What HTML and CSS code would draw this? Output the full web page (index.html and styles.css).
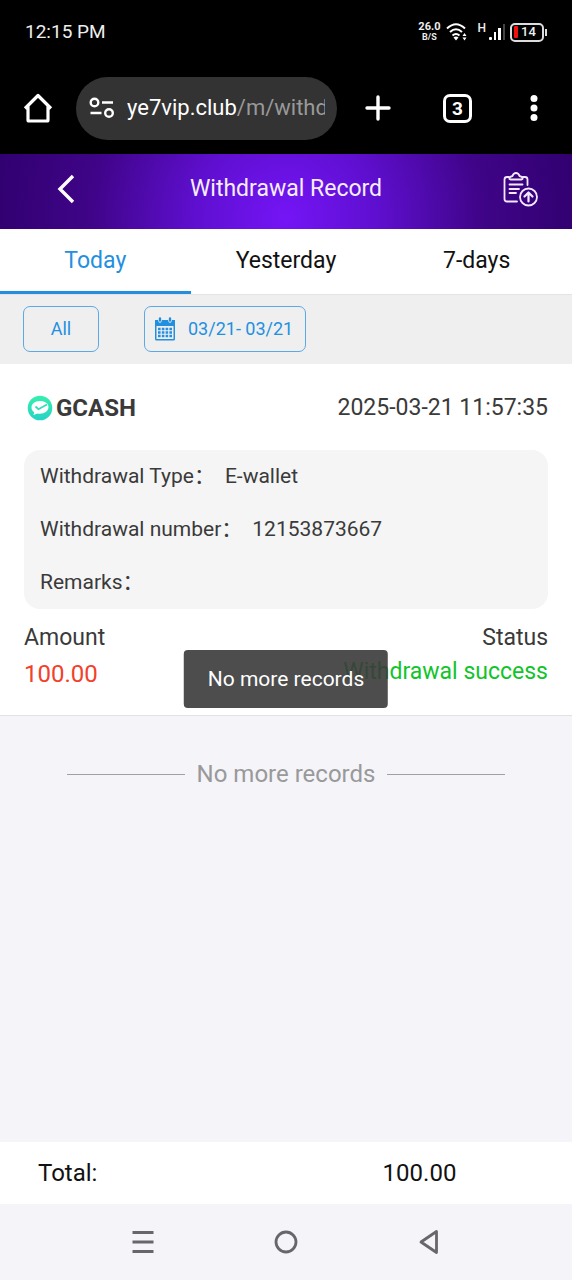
FILE: index.html
```html
<!DOCTYPE html>
<html lang="en">
<head>
<meta charset="utf-8">
<meta name="viewport" content="width=device-width, initial-scale=1">
<title>Withdrawal Record</title>
<link rel="stylesheet" href="styles.css">
</head>
<body>
<div class="status-bar">
  <time class="clock">12:15 PM</time>
  <div class="indicators">
    <div class="speed"><span class="speed-value">26.0</span><span class="speed-unit">B/S</span></div>
    <svg class="wifi" width="22" height="20" viewBox="0 0 22 20" fill="none" stroke="#fff" stroke-width="2">
      <path d="M1 6.500Q10 -2 19 6.500M4 10Q10 4.500 16 10M6.500 13.500Q10 10.500 13.500 13.500"/>
      <path d="M7.500 15.500L10 18.500L12.500 15.500Q10 13.500 7.500 15.500Z" fill="#fff" stroke="none"/>
      <path d="M18.500 11L20.500 14H16.500ZM18.500 18.500L16.500 15.500H20.500Z" fill="#fff" stroke="none"/>
    </svg>
    <span class="network">H</span>
    <svg class="signal" width="18" height="18" viewBox="0 0 18 18">
      <g fill="#fff"><rect x="1" y="14" width="3" height="3" rx="1"/><rect x="6" y="9" width="2" height="8"/><rect x="10" y="5" width="3" height="12"/></g>
      <rect x="15" y="1" width="2" height="16" fill="#444"/>
    </svg>
    <div class="battery"><span class="battery-level"></span>14</div>
  </div>
</div>

<div class="toolbar">
  <button class="tool home" aria-label="Home">
    <svg width="30" height="32" viewBox="0 0 30 32" fill="none" stroke="#fff" stroke-width="3.200" stroke-linejoin="round"><path d="M2 16.500L15 3.500L28 16.500M5 14.500V28Q5 29 6 29H24Q25 29 25 28V14.500"/></svg>
  </button>
  <button class="address">
    <svg class="tune" width="26" height="22" viewBox="0 0 26 22" fill="none" stroke="#fff" stroke-width="2.400"><circle cx="6.500" cy="5.500" r="3.800"/><path d="M14 5.500H25M2.500 16H13.500"/><circle cx="21" cy="16" r="3.800"/></svg>
    <span class="url">ye7vip.club<span class="path">/m/withdr</span></span>
  </button>
  <button class="tool add" aria-label="New tab">
    <svg width="28" height="28" viewBox="0 0 28 28" stroke="#fff" stroke-width="3.400" stroke-linecap="round"><path d="M14 3V25M3 14H25"/></svg>
  </button>
  <button class="tool tabs-count" aria-label="3 open tabs"><span class="count">3</span></button>
  <button class="tool more" aria-label="Menu">
    <svg width="8" height="28" viewBox="0 0 8 28" fill="#fff"><circle cx="4" cy="4.500" r="3.500"/><circle cx="4" cy="14" r="3.500"/><circle cx="4" cy="23.500" r="3.500"/></svg>
  </button>
</div>

<div class="app">
  <header class="header">
    <button class="icon-button back" aria-label="Back">
      <svg width="20" height="30" viewBox="0 0 20 30" fill="none" stroke="#fff" stroke-width="3.400"><path d="M17 2L4 15L17 28"/></svg>
    </button>
    <h1 class="title">Withdrawal Record</h1>
    <button class="icon-button submit" aria-label="Withdraw">
      <svg width="36" height="36" viewBox="0 0 36 36" fill="none" stroke="#f3e9ff" stroke-width="1.800" stroke-linecap="round" stroke-linejoin="round">
        <path d="M15 30.500H5Q2.500 30.500 2.500 28V8.500Q2.500 6 5 6H7M20.500 6H23Q25.500 6 25.500 8.500V14"/>
        <path d="M8.500 8.500Q7 8.500 7.500 7Q8 5.500 10.500 5Q11.500 2 14 2Q16.500 2 17.500 5Q20 5.500 20.500 7Q21 8.500 19.500 8.500Z"/>
        <path d="M7.500 13.500H20.500M7.500 18H17M7.500 22H14"/>
        <circle cx="26.500" cy="26" r="8.500"/>
        <path d="M26.500 30.500V22M22.500 25.500L26.500 21.500L30.500 25.500" stroke-width="2.200"/>
      </svg>
    </button>
  </header>

  <nav class="tabs">
    <button class="tab active">Today</button>
    <button class="tab">Yesterday</button>
    <button class="tab">7-days</button>
  </nav>

  <div class="filters">
    <button class="filter type">All</button>
    <button class="filter range">
      <svg width="22" height="24" viewBox="0 0 22 24">
        <path d="M1 3H4Q4.500 6 6 6Q7.500 6 8 3H14Q14.500 6 16 6Q17.500 6 18 3H21V22Q21 23.500 19.500 23.500H2.500Q1 23.500 1 22Z" fill="#248fdf"/>
        <path d="M6 1.500V3.500M16 1.500V3.500" stroke="#248fdf" stroke-width="2.400" stroke-linecap="round"/>
        <path d="M2.500 9H19.500V22H2.500Z" fill="#efefef"/>
        <path d="M4 12H18M4 15.500H18M4 19H18" stroke="#248fdf" stroke-width="2.400" stroke-dasharray="2.600 1.200"/>
      </svg>
      <span>03/21- 03/21</span>
    </button>
  </div>

  <article class="record">
    <div class="record-head">
      <h2 class="wallet">
        <svg width="26" height="26" viewBox="0 0 26 26">
          <defs><linearGradient id="mint" x1="0" y1="0" x2="0" y2="1"><stop offset="0" stop-color="#35f0ad"/><stop offset="1" stop-color="#25d3c5"/></linearGradient></defs>
          <circle cx="13" cy="13" r="12.300" fill="url(#mint)"/>
          <path d="M13 6C7.500 6 4.500 9 4.500 12.500C4.500 14.500 5.500 16 7.200 17.200L6.500 20L10.500 18.500C17 19.500 21.500 16 21.500 12C21.500 8.500 18 6 13 6Z" fill="#fff"/>
          <path d="M8.500 11.500L11.500 14.200L20 9.500" fill="none" stroke="#31dfb6" stroke-width="1.800"/>
        </svg>
        GCASH
      </h2>
      <time class="date">2025-03-21 11:57:35</time>
    </div>
    <dl class="details">
      <div class="detail"><dt>Withdrawal Type：</dt><dd>E-wallet</dd></div>
      <div class="detail"><dt>Withdrawal number：</dt><dd>12153873667</dd></div>
      <div class="detail"><dt>Remarks：</dt><dd></dd></div>
    </dl>
    <div class="summary">
      <div class="column"><span>Amount</span><span class="amount">100.00</span></div>
      <div class="column right"><span>Status</span><span class="success">Withdrawal success</span></div>
    </div>
  </article>

  <p class="end">No more records</p>

  <footer class="total"><span>Total:</span><span class="total-value">100.00</span></footer>
  <div class="toast" role="status">No more records</div>
</div>

<nav class="system-nav">
  <button class="tool" aria-label="Recent apps"><svg width="24" height="26" viewBox="0 0 24 26" stroke="#68666b" stroke-width="2.800"><path d="M1.500 3.500H22.500M1.500 13H22.500M1.500 22.500H22.500"/></svg></button>
  <button class="tool" aria-label="Home screen"><svg width="24" height="26" viewBox="0 0 24 26" fill="none" stroke="#68666b" stroke-width="2.800"><circle cx="12" cy="13" r="10"/></svg></button>
  <button class="tool" aria-label="Go back"><svg width="24" height="26" viewBox="0 0 24 26" fill="none" stroke="#68666b" stroke-width="2.800" stroke-linejoin="round"><path d="M19.500 2.500V23.500L4 13Z"/></svg></button>
</nav>
</body>
</html>
```

FILE: styles.css
```css
* {
  box-sizing: border-box;
}

body {
  display: flex;
  flex-direction: column;
  min-height: 100vh;
  margin: 0;
  background: #f4f4f9;
  color: #3a3a3a;
  font-family: Roboto, "Noto Sans CJK SC", sans-serif;
  font-size: 23px;
  line-height: 28px;
}

button {
  padding: 0;
  border: 0;
  background: none;
  color: inherit;
  font: inherit;
}

svg {
  display: block;
  flex: none;
}

h1,
h2,
p,
dl,
dd {
  margin: 0;
  font-size: inherit;
}

/* Device status bar */
.status-bar {
  display: flex;
  align-items: center;
  justify-content: space-between;
  height: 64px;
  padding: 0 28px 0 25px;
  background: #000;
  color: #eee;
}

.clock {
  font-size: 19px;
}

.indicators {
  display: flex;
  align-items: center;
}

.speed {
  display: flex;
  flex-direction: column;
  align-items: center;
  margin-right: 6px;
  font-size: 12px;
  font-weight: 700;
  line-height: 10px;
}

.speed-value {
  font-size: 11px;
}

.speed-unit {
  font-size: 9px;
}

.network {
  align-self: flex-start;
  margin: 0 2px 0 9px;
  font-size: 12px;
  font-weight: 500;
  line-height: 12px;
}

.signal {
  margin-right: 4px;
}

.battery {
  position: relative;
  display: flex;
  align-items: center;
  gap: 3px;
  width: 34px;
  height: 19px;
  padding-left: 2px;
  border: 2px solid #ddd;
  border-radius: 5px;
  font-size: 13px;
  font-weight: 500;
}

.battery::after {
  position: absolute;
  right: -5px;
  width: 2px;
  height: 7px;
  background: #ddd;
  content: "";
}

.battery-level {
  width: 4px;
  height: 12px;
  border-radius: 1px;
  background: #f01010;
}

/* Browser toolbar */
.toolbar {
  display: flex;
  align-items: center;
  height: 90px;
  padding: 0 34px 2px 23px;
  background: #000;
  color: #fff;
}

.tool {
  display: flex;
  align-items: center;
  justify-content: center;
}

.address {
  display: flex;
  flex: 1;
  align-items: center;
  gap: 13px;
  min-width: 0;
  height: 63px;
  margin: 0 27px 0 23px;
  padding: 0 12px;
  border-radius: 32px;
  background: #333;
}

.url {
  flex: 1;
  overflow: hidden;
  font-size: 22px;
  text-align: left;
  white-space: nowrap;
}

.path {
  color: #999;
}

.add {
  margin-right: 51px;
}

.tabs-count {
  margin-right: 58px;
}

.count {
  width: 29px;
  height: 29px;
  border: 3px solid #fff;
  border-radius: 7px;
  font-size: 19px;
  font-weight: 700;
  line-height: 23px;
}

/* Page */
.app {
  position: relative;
  display: flex;
  flex: 1;
  flex-direction: column;
}

.header {
  display: grid;
  grid-template-columns: 1fr auto 1fr;
  align-items: center;
  height: 75px;
  padding: 0 34px 5px;
  background: radial-gradient(circle 300px at 50% 85%, #7415f6 0%, #5f0fd0 30%, #3f0488 65%, #30006e 100%);
  color: #f5ecff;
}

.back {
  margin-left: 22px;
}

.submit {
  justify-self: end;
}

.title {
  font-weight: 400;
}

.tabs {
  display: grid;
  grid-template-columns: repeat(3, 1fr);
  height: 66px;
  border-bottom: 1px solid #e4e4e4;
  background: #fff;
  color: #111;
}

.tab {
  padding-top: 2px;
  border-bottom: 3px solid transparent;
}

.tab.active {
  border-color: #248fdf;
  color: #248fdf;
}

.filters {
  display: flex;
  gap: 45px;
  padding: 11px 23px 12px;
  background: #efefef;
}

.filter {
  display: flex;
  align-items: center;
  justify-content: center;
  height: 46px;
  border: 1px solid #5ba9e5;
  border-radius: 7px;
  color: #248fdf;
  font-size: 18px;
}

.type {
  width: 76px;
}

.range {
  gap: 12px;
  padding: 0 12px 0 9px;
}

/* Withdrawal record */
.record {
  padding: 27px 24px;
  border-bottom: 1px solid #e2e2e4;
  background: #fff;
}

.record-head {
  display: flex;
  align-items: center;
  justify-content: space-between;
  height: 34px;
  margin-bottom: 25px;
}

.wallet {
  display: flex;
  align-items: center;
  gap: 3px;
  padding-left: 3px;
  font-size: 24px;
  font-weight: 700;
}

.details {
  display: grid;
  gap: 25px;
  padding: 12px 16px 13px;
  border-radius: 16px;
  background: #f5f5f5;
  font-size: 21px;
}

.detail {
  display: flex;
  gap: 10px;
}

.summary {
  display: flex;
  justify-content: space-between;
  padding-top: 15px;
}

.column {
  display: flex;
  flex-direction: column;
  gap: 8px;
}

.right {
  gap: 6px;
  text-align: right;
}

.amount {
  color: #f2402b;
  font-size: 24px;
}

.success {
  color: #12c42b;
}

.end {
  display: flex;
  align-items: center;
  gap: 12px;
  margin: 44px 67px 0;
  color: #999;
  font-size: 24px;
}

.end::before,
.end::after {
  flex: 1;
  height: 1px;
  background: #a0a0a8;
  content: "";
}

.total {
  display: grid;
  grid-template-columns: 1fr 1fr;
  align-items: center;
  height: 62px;
  margin-top: auto;
  padding-left: 38px;
  background: #fff;
  color: #111;
  font-size: 24px;
}

.total-value {
  padding-right: 38px;
  text-align: center;
}

.toast {
  position: absolute;
  top: 50%;
  left: 50%;
  padding: 15px 24px;
  border-radius: 4px;
  background: rgba(58, 58, 58, 0.9);
  color: #fff;
  font-size: 21px;
  white-space: nowrap;
  transform: translate(-50%, -50%);
}

/* Device navigation */
.system-nav {
  display: grid;
  grid-template-columns: repeat(3, 1fr);
  align-items: center;
  height: 76px;
  padding: 0 12.5%;
}
```
